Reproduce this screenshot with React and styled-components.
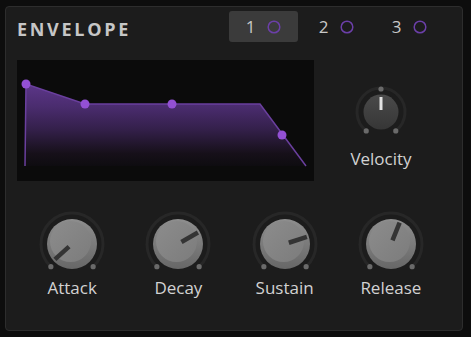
import React from "react";
import styled, { createGlobalStyle } from "styled-components";

const GlobalStyle = createGlobalStyle`
  body {
    margin: 0;
    background: #0d0d0d;
    font-family: "Open Sans", "Noto Sans", sans-serif;
  }
`;

const Page = styled.div`
  padding: 6px 0 0 5px;
`;

const Panel = styled.div`
  box-sizing: border-box;
  width: 458px;
  height: 325px;
  background: #1c1c1c;
  border: 1px solid #2d2d2d;
  border-radius: 4px;
  padding: 4px 18px 0 11px;
`;

const Header = styled.div`
  display: flex;
  align-items: center;
  height: 31px;
`;

const Title = styled.h1`
  margin: 4px 0 0;
  font-size: 18px;
  font-weight: 700;
  letter-spacing: 2.7px;
  color: #c6c6c6;
`;

const Tabs = styled.div`
  display: flex;
  gap: 4px;
  margin-left: auto;
`;

const Tab = styled.div`
  width: 69px;
  height: 31px;
  display: flex;
  align-items: center;
  justify-content: center;
  gap: 12px;
  border-radius: 3px;
  background: ${(p) => (p.$active ? "#3b3b3b" : "transparent")};
  color: #c8c8c8;
  font-size: 17px;
`;

const Main = styled.div`
  display: flex;
  margin-top: 18px;
`;

const Display = styled.div`
  width: 297px;
  height: 121px;
  background: #0b0b0b;
`;

const VelocityCol = styled.div`
  width: 80px;
  margin-left: 27px;
  padding-top: 24px;
  display: flex;
  flex-direction: column;
  align-items: center;
`;

const KnobRow = styled.div`
  display: flex;
  margin-top: 28px;
  padding-left: 2px;
`;

const KnobCell = styled.div`
  width: 107px;
  display: flex;
  flex-direction: column;
  align-items: center;
`;

const Label = styled.div`
  margin-top: ${(p) => p.$gap}px;
  line-height: 22px;
  font-size: 17px;
  color: #d2d2d2;
`;

const polar = (cx, cy, r, deg) => {
  const a = ((deg - 90) * Math.PI) / 180;
  return [cx + r * Math.cos(a), cy + r * Math.sin(a)];
};

function Ring({ c, r, from, to }) {
  const [x1, y1] = polar(c, c, r, from);
  const [x2, y2] = polar(c, c, r, to);
  return (
    <>
      <path
        d={`M${x1} ${y1} A${r} ${r} 0 1 1 ${x2} ${y2}`}
        fill="none"
        stroke="#272727"
        strokeWidth="3"
      />
      <circle cx={x1} cy={y1} r="2.6" fill="#6a6a6a" />
      <circle cx={x2} cy={y2} r="2.6" fill="#6a6a6a" />
    </>
  );
}

function BigKnob({ angle, id }) {
  const c = 35;
  const [px1, py1] = polar(c, c, 4, angle);
  const [px2, py2] = polar(c, c, 23, angle);
  return (
    <svg width="70" height="70" viewBox="0 0 70 70">
      <defs>
        <linearGradient id={`body${id}`} x1="0" y1="0" x2="0" y2="1">
          <stop offset="0" stopColor="#8e8e8e" />
          <stop offset="1" stopColor="#676767" />
        </linearGradient>
        <linearGradient id={`cap${id}`} x1="0" y1="0" x2="1" y2="1">
          <stop offset="0" stopColor="#8c8c8c" />
          <stop offset="1" stopColor="#7c7c7c" />
        </linearGradient>
      </defs>
      <Ring c={c} r={31} from={-137} to={137} />
      <circle cx={c} cy={c} r="25" fill={`url(#body${id})`} />
      <circle cx={c - 1.5} cy={c - 2.5} r="20.5" fill={`url(#cap${id})`} />
      <line x1={px1} y1={py1} x2={px2} y2={py2} stroke="#343434" strokeWidth="4.5" />
    </svg>
  );
}

function VelocityKnob() {
  const c = 28;
  return (
    <svg width="56" height="56" viewBox="0 0 56 56">
      <defs>
        <linearGradient id="vel" x1="0" y1="0" x2="0" y2="1">
          <stop offset="0" stopColor="#4a4a4a" />
          <stop offset="1" stopColor="#363636" />
        </linearGradient>
      </defs>
      <Ring c={c} r={24} from={-142} to={142} />
      <circle cx={c} cy={c - 23} r="2.6" fill="#6a6a6a" />
      <circle cx={c} cy={c} r="17.5" fill="url(#vel)" />
      <line x1={c} y1={c - 2} x2={c} y2={c - 15} stroke="#e2e2e2" strokeWidth="3" />
    </svg>
  );
}

function Envelope() {
  const pts = [
    [9, 24],
    [68, 44],
    [155, 44],
    [265, 75],
  ];
  return (
    <svg width="297" height="121" viewBox="0 0 297 121">
      <defs>
        <linearGradient id="fill" x1="0" y1="0" x2="0" y2="1">
          <stop offset="0" stopColor="#5c3689" />
          <stop offset="0.28" stopColor="#4a2c6e" />
          <stop offset="0.55" stopColor="#34204b" />
          <stop offset="0.85" stopColor="#161019" />
          <stop offset="1" stopColor="#0e0c10" />
        </linearGradient>
      </defs>
      <path d="M8 106 L9 24 L68 44 L243 44 L289 106 Z" fill="url(#fill)" />
      <path
        d="M8 106 L9 24 L68 44 L243 44 L289 106"
        fill="none"
        stroke="#6a3f9e"
        strokeWidth="1.5"
      />
      {pts.map(([x, y]) => (
        <circle key={x} cx={x} cy={y} r="4.5" fill="#9350d4" />
      ))}
    </svg>
  );
}

function TabCircle() {
  return (
    <svg width="14" height="14" viewBox="0 0 14 14">
      <circle cx="7" cy="7" r="5.8" fill="none" stroke="#6b3fa8" strokeWidth="1.5" />
    </svg>
  );
}

const knobs = [
  { name: "Attack", angle: -132 },
  { name: "Decay", angle: 60 },
  { name: "Sustain", angle: 72 },
  { name: "Release", angle: 22 },
];

export default function App() {
  return (
    <>
      <GlobalStyle />
      <Page>
        <Panel>
          <Header>
            <Title>ENVELOPE</Title>
            <Tabs>
              {[1, 2, 3].map((n) => (
                <Tab key={n} $active={n === 1}>
                  <span>{n}</span>
                  <TabCircle />
                </Tab>
              ))}
            </Tabs>
          </Header>
          <Main>
            <Display>
              <Envelope />
            </Display>
            <VelocityCol>
              <VelocityKnob />
              <Label $gap={8}>Velocity</Label>
            </VelocityCol>
          </Main>
          <KnobRow>
            {knobs.map((k, i) => (
              <KnobCell key={k.name}>
                <BigKnob angle={k.angle} id={i} />
                <Label $gap={-2}>{k.name}</Label>
              </KnobCell>
            ))}
          </KnobRow>
        </Panel>
      </Page>
    </>
  );
}
